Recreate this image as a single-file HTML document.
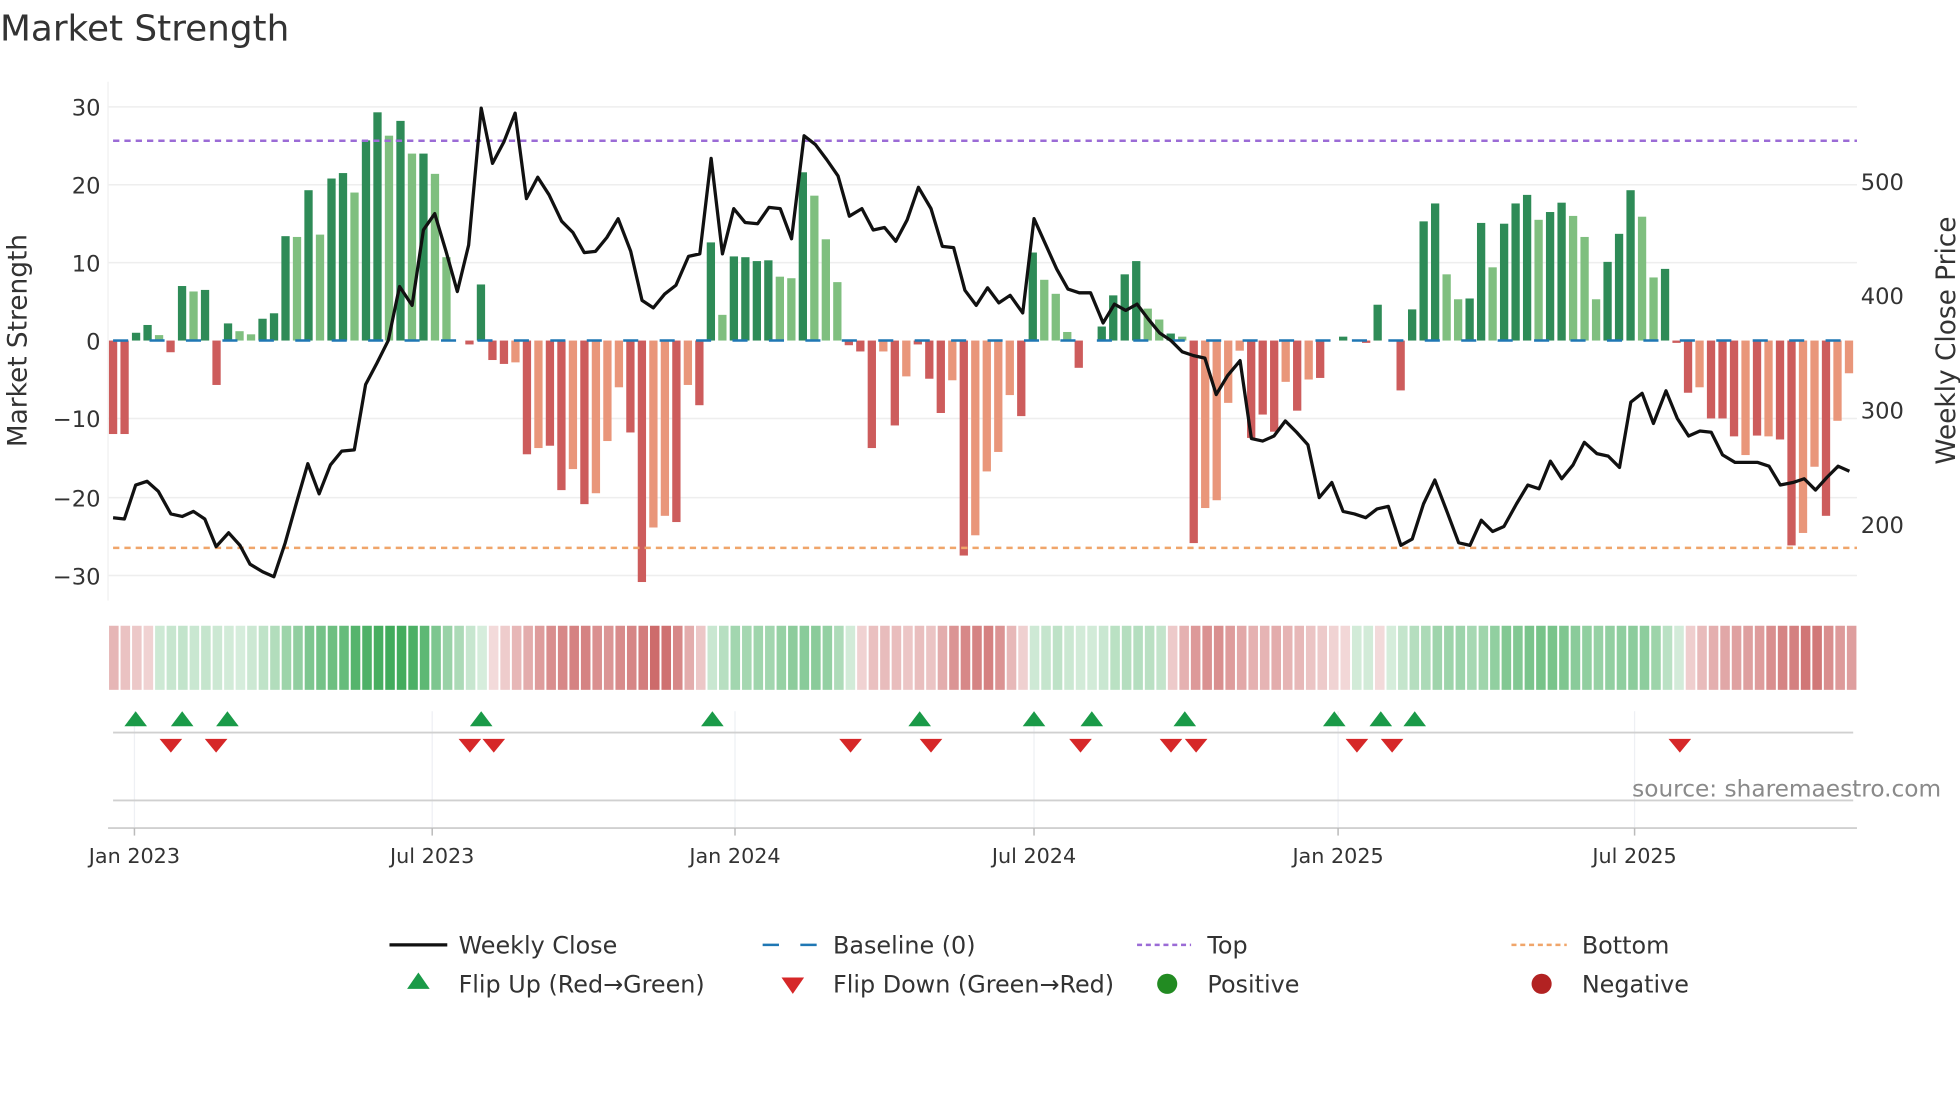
<!DOCTYPE html>
<html><head><meta charset="utf-8"><style>
html,body{margin:0;padding:0;background:#fff;width:1960px;height:1102px;overflow:hidden}
svg{display:block}
text{font-family:"DejaVu Sans","Liberation Sans",sans-serif;fill:#333}
</style></head><body>
<svg id="s" width="1960" height="1102" viewBox="0 0 1560 877" xmlns="http://www.w3.org/2000/svg">
<text x="0" y="32" font-size="28.5">Market Strength</text>
<g stroke="#eeeeee" stroke-width="1.2">
<line x1="86" x2="1478" y1="85" y2="85"/><line x1="86" x2="1478" y1="147" y2="147"/><line x1="86" x2="1478" y1="209" y2="209"/><line x1="86" x2="1478" y1="333" y2="333"/><line x1="86" x2="1478" y1="396" y2="396"/><line x1="86" x2="1478" y1="458" y2="458"/>
</g>
<line x1="86" y1="65" x2="86" y2="478" stroke="#f0f0f0"/>
<g font-size="18" text-anchor="end">
<text x="80" y="92">30</text><text x="80" y="154">20</text><text x="80" y="216">10</text><text x="80" y="278">0</text><text x="80" y="340">−10</text><text x="80" y="403">−20</text><text x="80" y="465">−30</text>
</g>
<g font-size="18">
<text x="1481" y="151">500</text><text x="1481" y="242">400</text><text x="1481" y="333">300</text><text x="1481" y="424">200</text>
</g>
<text transform="translate(21,271) rotate(-90)" font-size="21" text-anchor="middle">Market Strength</text>
<text transform="translate(1556,271) rotate(-90)" font-size="21" text-anchor="middle">Weekly Close Price</text>
<g id="bars"></g>
<line x1="90" x2="1478" y1="271" y2="271" stroke="#1f77b4" stroke-width="2" stroke-dasharray="12,17"/>
<line x1="90" x2="1478" y1="112" y2="112" stroke="#9b6bd6" stroke-width="2" stroke-dasharray="5,4"/>
<line x1="90" x2="1478" y1="436" y2="436" stroke="#f0a56a" stroke-width="2" stroke-dasharray="5,4"/>
<polyline id="price" fill="none" stroke="#111" stroke-width="2.6" stroke-linejoin="round"/>
<g id="heat"></g>
<g stroke="#eef0f4" stroke-width="1">
<line x1="107" x2="107" y1="566" y2="660"/><line x1="344" x2="344" y1="566" y2="660"/><line x1="585" x2="585" y1="566" y2="660"/><line x1="823" x2="823" y1="566" y2="660"/><line x1="1065" x2="1065" y1="566" y2="660"/><line x1="1301" x2="1301" y1="566" y2="660"/>
</g>
<line x1="90" x2="1475" y1="583" y2="583" stroke="#d0d0d0" stroke-width="1.5"/>
<line x1="90" x2="1475" y1="637" y2="637" stroke="#d0d0d0" stroke-width="1.5"/>
<line x1="86" x2="1478" y1="659" y2="659" stroke="#d0d0d0" stroke-width="1.5"/>
<g stroke="#bbb" stroke-width="1.2">
<line x1="107" x2="107" y1="659" y2="665"/><line x1="344" x2="344" y1="659" y2="665"/><line x1="585" x2="585" y1="659" y2="665"/><line x1="823" x2="823" y1="659" y2="665"/><line x1="1065" x2="1065" y1="659" y2="665"/><line x1="1301" x2="1301" y1="659" y2="665"/>
</g>
<g id="mk"></g>
<g font-size="16.5" text-anchor="middle">
<text x="107" y="687">Jan 2023</text><text x="344" y="687">Jul 2023</text><text x="585" y="687">Jan 2024</text><text x="823" y="687">Jul 2024</text><text x="1065" y="687">Jan 2025</text><text x="1301" y="687">Jul 2025</text>
</g>
<text x="1545" y="634" font-size="18.5" text-anchor="end" style="fill:#8a8a8a">source: sharemaestro.com</text>
<g font-size="19">
<line x1="310" x2="356" y1="752" y2="752" stroke="#111" stroke-width="2.6"/><text x="365" y="759">Weekly Close</text>
<line x1="607" x2="650" y1="752" y2="752" stroke="#1f77b4" stroke-width="2" stroke-dasharray="13,17"/><text x="663" y="759">Baseline (0)</text>
<line x1="905" x2="948" y1="752" y2="752" stroke="#9b6bd6" stroke-width="2" stroke-dasharray="4,3"/><text x="961" y="759">Top</text>
<line x1="1203" x2="1247" y1="752" y2="752" stroke="#f0a56a" stroke-width="2" stroke-dasharray="4,3"/><text x="1259" y="759">Bottom</text>
<polygon points="333,774 342,787 324,787" fill="#1a9a48"/><text x="365" y="790">Flip Up (Red→Green)</text>
<polygon points="622,778 640,778 631,791" fill="#d62728"/><text x="663" y="790">Flip Down (Green→Red)</text>
<circle cx="929" cy="783" r="8" fill="#228b22"/><text x="961" y="790">Positive</text>
<circle cx="1227" cy="783" r="8" fill="#b22222"/><text x="1259" y="790">Negative</text>
</g>
</svg>
<script>
var NS="http://www.w3.org/2000/svg";
function el(p,t,a){var e=document.createElementNS(NS,t);for(var k in a)e.setAttribute(k,a[k]);p.appendChild(e);return e;}
var V=[[-12,0],[-12,0],[1,0],[2,0],[0.7,1],[-1.5,0],[7,0],[6.3,1],[6.5,0],[-5.7,0],[2.2,0],[1.2,1],[0.8,1],[2.8,0],[3.5,0],[13.4,0],[13.3,1],[19.3,0],[13.6,1],[20.8,0],[21.5,0],[19,1],[25.7,0],[29.3,0],[26.3,1],[28.2,0],[24,1],[24,0],[21.4,1],[10.7,1],[0,0],[-0.5,0],[7.2,0],[-2.5,0],[-3,0],[-2.8,1],[-14.6,0],[-13.8,1],[-13.5,0],[-19.2,0],[-16.5,1],[-21,0],[-19.6,1],[-12.9,1],[-6,1],[-11.8,0],[-31,0],[-24,1],[-22.5,1],[-23.3,0],[-5.7,1],[-8.3,0],[12.6,0],[3.3,1],[10.8,0],[10.7,0],[10.2,0],[10.3,0],[8.2,1],[8,1],[21.6,0],[18.6,1],[13,1],[7.5,1],[-0.6,0],[-1.4,0],[-13.8,0],[-1.4,1],[-10.9,0],[-4.6,1],[-0.5,0],[-4.9,0],[-9.3,0],[-5.1,1],[-27.6,0],[-25,1],[-16.8,1],[-14.3,1],[-7,1],[-9.7,0],[11.3,0],[7.8,1],[6,1],[1.1,1],[-3.5,0],[0,0],[1.8,0],[5.8,0],[8.5,0],[10.2,0],[4.1,1],[2.7,1],[0.9,0],[0.5,1],[-26,0],[-21.5,1],[-20.5,1],[-8,1],[-1.3,1],[-12.5,0],[-9.5,0],[-11.7,0],[-5.3,1],[-9,0],[-5,1],[-4.8,0],[0,0],[0.5,0],[0,0],[-0.3,0],[4.6,0],[0,0],[-6.4,0],[4,0],[15.3,0],[17.6,0],[8.5,1],[5.3,1],[5.4,0],[15.1,0],[9.4,1],[15,0],[17.6,0],[18.7,0],[15.5,1],[16.5,0],[17.7,0],[16,1],[13.3,1],[5.3,1],[10.1,0],[13.7,0],[19.3,0],[15.9,1],[8.1,1],[9.2,0],[-0.3,0],[-6.7,0],[-6,1],[-10,0],[-10,0],[-12.3,0],[-14.7,1],[-12.2,0],[-12.3,1],[-12.7,0],[-26.3,0],[-24.7,1],[-16.2,1],[-22.5,0],[-10.3,1],[-4.2,1]];
var bars=document.getElementById('bars'),heat=document.getElementById('heat');
function mix(c,t){return 'rgb('+c.map(function(x){return Math.round(255+(x-255)*t)}).join(',')+')';}
for(var i=0;i<V.length;i++){
 var v=V[i][0],l=V[i][1],cx=90+i*9.15,h=Math.abs(v)*6.2;
 var col=v>=0?(l?'#7fbf7f':'#2e8b57'):(l?'#e9967a':'#cd5c5c');
 if(h>0.5)el(bars,'rect',{x:cx-3.3,y:v>=0?271-h:271,width:6.6,height:h,fill:col});
 var s=0,n=0;for(var j=Math.max(0,i-2);j<=Math.min(V.length-1,i+2);j++){s+=V[j][0];n++;}
 var a=s/n,t=Math.min(1,0.2+Math.abs(a)/28*0.8);
 el(heat,'rect',{x:86+i*9.16+0.8,y:498,width:7.6,height:51,fill:a>=0?mix([58,168,85],t):mix([196,80,80],t)});
}
var P="90,412 99,413 108,386 117,383 126,391 136,409 145,411 154,407 163,413 172,435 182,424 191,434 199,449 209,455 218,459 227,432 236,400 245,369 254,393 263,370 272,359 282,358 291,306 300,289 309,271 318,228 328,243 337,183 346,170 355,200 364,232 373,195 383,86 392,130 401,113 410,90 419,158 428,141 437,155 447,176 456,185 465,201 474,200 483,189 492,174 502,200 511,239 520,245 529,234 538,227 548,204 557,202 566,126 575,202 584,166 593,177 603,178 612,165 621,166 630,190 640,108 649,115 658,127 667,140 676,172 686,166 695,183 704,181 713,192 722,175 731,149 741,166 750,196 759,197 768,231 777,243 786,229 795,241 804,235 814,249 823,174 832,194 841,214 850,230 859,233 868,233 878,257 887,242 896,247 905,242 914,254 923,265 932,271 941,280 950,283 959,285 968,314 977,299 987,287 996,349 1005,351 1014,347 1023,335 1032,344 1041,354 1050,396 1060,384 1069,407 1078,409 1087,412 1096,405 1105,403 1115,434 1124,429 1133,401 1142,382 1152,408 1161,432 1170,434 1179,414 1188,423 1197,419 1207,401 1216,386 1225,389 1234,367 1243,381 1252,370 1261,352 1271,361 1280,363 1289,372 1298,320 1307,313 1316,337 1326,311 1335,333 1344,347 1353,343 1362,344 1371,362 1381,368 1390,368 1399,368 1408,371 1417,386 1427,384 1436,381 1445,390 1454,380 1463,371 1472,375";
document.getElementById('price').setAttribute('points',P);
var mk=document.getElementById('mk');
[108,145,181,383,567,732,823,869,943,1062,1099,1126].forEach(function(x){el(mk,'polygon',{points:(x)+',566 '+(x+9)+',578 '+(x-9)+',578',fill:'#1a9a48'});});
[136,172,374,393,677,741,860,932,952,1080,1108,1337].forEach(function(x){el(mk,'polygon',{points:(x-9)+',588 '+(x+9)+',588 '+x+',599',fill:'#d62728'});});
</script>
</body></html>
